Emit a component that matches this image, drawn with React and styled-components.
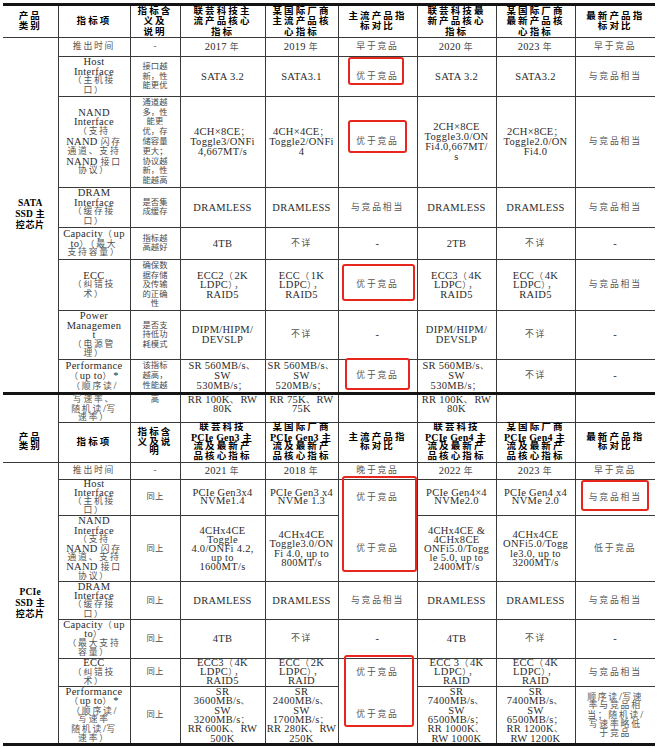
import React from 'react';
import styled, { createGlobalStyle } from 'styled-components';

const GlobalStyle = createGlobalStyle`
  html, body {
    margin: 0;
    padding: 0;
    background: #fff;
  }
  body {
    font-family: "Liberation Serif", "Noto Sans CJK SC", serif;
  }
`;

const COLS = [55, 72, 50, 85, 73, 79, 79, 79, 80];
const LINE = '#3a3a3a';
const THICK = '3px solid #141414';

const Page = styled.div`
  position: relative;
  width: 660px;
  height: 748px;
  overflow: hidden;
  box-sizing: border-box;
  padding: 3px 0 0 3px;
`;

const Table = styled.table`
  border-collapse: collapse;
  table-layout: fixed;
  width: 652px;
`;

const Tr = styled.tr`
  height: ${p => p.$h}px;
`;

const Td = styled.td`
  padding: 0 1px;
  font-size: 9px;
  line-height: 9px;
  text-align: center;
  vertical-align: ${p => (p.$top ? 'top' : 'middle')};
  border-left: ${p => (p.$first ? 'none' : `1px solid ${LINE}`)};
  border-top: ${p => (p.$topThick ? THICK : 'none')};
  border-bottom: ${p =>
    p.$bottom === 'thick' ? THICK : p.$bottom === 'hidden' ? '1px hidden' : `1px solid ${LINE}`};
`;

// one text line of a cell, held at a fixed pitch
const Line = styled.div`
  display: flex;
  justify-content: center;
  align-items: baseline;
  height: ${p => p.$lh}px;
  line-height: ${p => p.$lh}px;
  white-space: nowrap;
`;

// size / spacing / weight / colour per cell kind, split by script
const RUN = {
  body: { lat: [10.5, 0.3, 400, '#2b2b2b'], zh: [8.8, 1.8, 400, '#555'] },
  narrow: { lat: [9, 0.2, 400, '#444'], zh: [8.3, 0.1, 400, '#4a4a4a'] },
  head: { lat: [10, 0.2, 700, '#000'], zh: [9.5, 2.1, 700, '#000'] },
  label: { lat: [9.5, 0.2, 700, '#000'], zh: [9, 0.6, 700, '#000'] },
};

const Run = styled.span`
  font-size: ${p => RUN[p.$kind][p.$zh ? 'zh' : 'lat'][0]}px;
  letter-spacing: ${p => RUN[p.$kind][p.$zh ? 'zh' : 'lat'][1]}px;
  font-weight: ${p => RUN[p.$kind][p.$zh ? 'zh' : 'lat'][2]};
  color: ${p => RUN[p.$kind][p.$zh ? 'zh' : 'lat'][3]};
  white-space: pre;
`;

// red annotation frames drawn over the table
const Mark = styled.div`
  position: absolute;
  left: ${p => p.$x}px;
  top: ${p => p.$y}px;
  width: ${p => p.$w}px;
  height: ${p => p.$h}px;
  box-sizing: border-box;
  border: 2.5px solid #e8261e;
  border-radius: 3px;
  pointer-events: none;
`;

const ZH = /([\u3000-\u303f\u4e00-\u9fff\uff00-\uffef]+)/;

function Cell({ text, kind = 'body', lh = 9.4, ...rest }) {
  return (
    <Td {...rest}>
      {text.split('|').map((l, i) => (
        <Line key={i} $lh={lh}>
          {l.split(ZH).filter(Boolean).map((part, j) => (
            <Run key={j} $kind={kind} $zh={ZH.test(part)}>{part}</Run>
          ))}
        </Line>
      ))}
    </Td>
  );
}

const sataHead = [
  '指标项', '指标含|义及|说明', '联芸科技主|流产品核心|指标', '某国际厂商|主流产品核|心指标',
  '主流产品指|标对比', '联芸科技最|新产品核心|指标', '某国际厂商|最新产品核|心指标', '最新产品指|标对比',
];

const pcieHead = [
  '指标项', '指标含|义及说|明', '联芸科技|PCIe Gen3 主|流及最新产|品核心指标', '某国际厂商|PCIe Gen3 主|流及最新产|品核心指标',
  '主流产品指|标对比', '联芸科技|PCIe Gen4 主|流及最新产|品核心指标', '某国际厂商|PCIe Gen4 主|流及最新产|品核心指标', '最新产品指|标对比',
];

const sataRows = [
  { h: 19, c: ['推出时间', '-', '2017 年', '2019 年', '早于竞品', '2020 年', '2023 年', '早于竞品'] },
  { h: 40, lh: 9.6, c: ['Host|Interface|（主机接|口）', '接口越|新，性|能更优', 'SATA 3.2', 'SATA3.1', '优于竞品', 'SATA 3.2', 'SATA3.2', '与竞品相当'] },
  {
    h: 91, lh: 9.8, c: ['NAND|Interface|（支持|NAND 闪存|通道、支持|NAND 接口|协议）', '通道越|多，性|能更|优，存|储容量|更大；|协议越|新，性|能越高',
      '4CH×8CE；|Toggle3/ONFi|4,667MT/s', '4CH×4CE；|Toggle2/ONFi|4', '优于竞品', '2CH×8CE|Toggle3.0/ON|Fi4.0,667MT/|s',
      '2CH×8CE；|Toggle2.0/ON|Fi4.0', '与竞品相当'],
  },
  { h: 40, lh: 9.6, c: ['DRAM|Interface|（缓存接|口）', '是否集|成缓存', 'DRAMLESS', 'DRAMLESS', '与竞品相当', 'DRAMLESS', 'DRAMLESS', '与竞品相当'] },
  { h: 32, lh: 9.6, c: ['Capacity（up|to）（最大|支持容量）', '指标越|高越好', '4TB', '不详', '-', '2TB', '不详', '-'] },
  {
    h: 51, lh: 9.6, c: ['ECC|（纠错技|术）', '确保数|据存储|及传输|的正确|性', 'ECC2（2K|LDPC），|RAID5', 'ECC（1K|LDPC），|RAID5',
      '优于竞品', 'ECC3（4K|LDPC），|RAID5', 'ECC（4K|LDPC），|RAID5', '与竞品相当'],
  },
  { h: 49, lh: 9.6, c: ['Power|Managemen|t|（电源管|理）', '是否支|持低功|耗模式', 'DIPM/HIPM/|DEVSLP', '不详', '-', 'DIPM/HIPM/|DEVSLP', '不详', '-'] },
  {
    h: 34, lh: 9.8, c: ['Performance|（up to）*|（顺序读/', '该指标|越高，|性能越', 'SR 560MB/s、|SW|530MB/s；', 'SR 560MB/s、|SW|520MB/s；',
      '优于竞品', 'SR 560MB/s、|SW|530MB/s；', '不详', '-'],
  },
];

// continuation of the performance row after the page break
const carryRow = {
  h: 26, lh: 9, top: true, thick: true,
  c: ['写速率、|随机读/写|速率）', '高', 'RR 100K、RW|80K', 'RR 75K、RW|75K', '', 'RR 100K、RW|80K', '', ''],
};

const pcieRows = [
  { h: 17, c: ['推出时间', '-', '2021 年', '2018 年', '晚于竞品', '2022 年', '2023 年', '早于竞品'] },
  {
    h: 36, lh: 8.8, open: 4, c: ['Host|Interface|（主机接|口）', '同上', 'PCIe Gen3x4|NVMe1.4', 'PCIe Gen3 x4|NVMe 1.3', '优于竞品',
      'PCIe Gen4×4|NVMe2.0', 'PCIe Gen4 x4|NVMe 2.0', '与竞品相当'],
  },
  {
    h: 66, lh: 9.2, c: ['NAND|Interface|（支持|NAND 闪存|通道、支持|NAND 接口|协议）', '同上', '4CHx4CE|Toggle|4.0/ONFi 4.2,|up to|1600MT/s',
      '4CHx4CE|Toggle3.0/ON|Fi 4.0, up to|800MT/s', '优于竞品', '4CHx4CE &|4CHx8CE|ONFi5.0/Togg|le 5.0, up to|2400MT/s',
      '4CHx4CE|ONFi5.0/Togg|le3.0, up to|3200MT/s', '低于竞品'],
  },
  { h: 37, lh: 9.2, c: ['DRAM|Interface|（缓存接|口）', '同上', 'DRAMLESS', 'DRAMLESS', '与竞品相当', 'DRAMLESS', 'DRAMLESS', '与竞品相当'] },
  { h: 39, lh: 9.4, c: ['Capacity（up|to）|（最大支持|容量）', '同上', '4TB', '不详', '-', '4TB', '不详', '-'] },
  {
    h: 28, lh: 8.8, open: 4, c: ['ECC|（纠错技|术）', '同上', 'ECC3（4K|LDPC），|RAID5', 'ECC（2K|LDPC），|RAID', '优于竞品',
      'ECC 3（4K|LDPC），|RAID', 'ECC（4K|LDPC），|RAID', '与竞品相当'],
  },
  {
    h: 58, lh: 9.4, bottom: 'thick', c: ['Performance|（up to）*|（顺序读/|写速率|随机读/写|速率）', '同上',
      'SR|3600MB/s、|SW|3200MB/s；|RR 600K、RW|500K', 'SR|2400MB/s、|SW|1700MB/s；|RR 280K、RW|250K', '优于竞品',
      'SR|7400MB/s、|SW|6500MB/s；|RR 1000K、|RW 1000K', 'SR|7400MB/s、|SW|6500MB/s；|RR 1200K、|RW 1200K',
      '顺序读/写速|率与竞品相|当；随机读/|写速率略低|于竞品'],
  },
];

const marks = [
  { x: 348, y: 57, w: 56, h: 28 },
  { x: 348, y: 120, w: 59, h: 33 },
  { x: 342, y: 264, w: 73, h: 37 },
  { x: 345, y: 358, w: 65, h: 32 },
  { x: 342, y: 476, w: 75, h: 96 },
  { x: 581, y: 480, w: 68, h: 31 },
  { x: 344, y: 655, w: 70, h: 72 },
];

function HeadRow({ cells, h, lh, thick }) {
  return (
    <Tr $h={h}>
      <Cell text="产品|类别" kind="head" lh={lh} $first $topThick={thick} />
      {cells.map((t, i) => (
        <Cell key={i} text={t} kind="head" lh={lh} $topThick={thick} />
      ))}
    </Tr>
  );
}

function BodyRow({ row, lead }) {
  return (
    <Tr $h={row.h}>
      {lead}
      {row.c.map((t, i) => (
        <Cell
          key={i}
          text={t}
          kind={i === 1 ? 'narrow' : 'body'}
          lh={row.lh}
          $top={row.top}
          $topThick={row.thick}
          $bottom={row.bottom || (row.open === i ? 'hidden' : undefined)}
        />
      ))}
    </Tr>
  );
}

export default function App() {
  return (
    <Page>
      <GlobalStyle />
      <Table>
        <colgroup>
          {COLS.map((w, i) => <col key={i} style={{ width: w }} />)}
        </colgroup>
        <tbody>
          <HeadRow cells={sataHead} h={32} lh={10.3} thick />
          {sataRows.map((row, i) => (
            <BodyRow
              key={`s${i}`}
              row={row}
              lead={i === 0 ? <Cell text="SATA|SSD 主|控芯片" kind="label" lh={11} $first rowSpan={sataRows.length} /> : null}
            />
          ))}
          <BodyRow row={carryRow} lead={<Td $first $topThick $bottom="hidden" />} />
          <HeadRow cells={pcieHead} h={40} lh={9.5} />
          {pcieRows.map((row, i) => (
            <BodyRow
              key={`p${i}`}
              row={row}
              lead={i === 0 ? <Cell text="PCIe|SSD 主|控芯片" kind="label" lh={11} $first $bottom="thick" rowSpan={pcieRows.length} /> : null}
            />
          ))}
        </tbody>
      </Table>
      {marks.map((m, i) => (
        <Mark key={i} $x={m.x} $y={m.y} $w={m.w} $h={m.h} />
      ))}
    </Page>
  );
}
